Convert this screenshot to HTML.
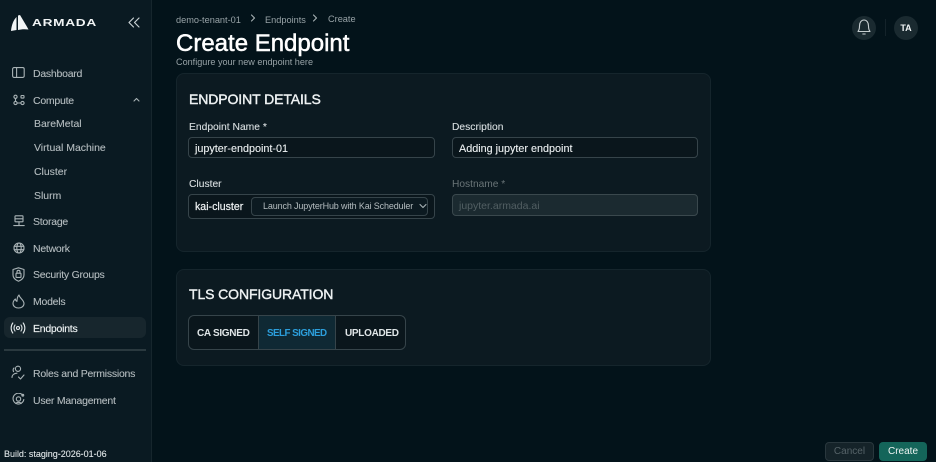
<!DOCTYPE html>
<html>
<head>
<meta charset="utf-8">
<style>
html,body{margin:0;padding:0;width:936px;height:462px;overflow:hidden;background:#03131a}
body{position:relative;font-family:"Liberation Sans","Noto Sans CJK JP",sans-serif;color:#e8eef0}
#w{position:absolute;left:0;top:0;width:936px;height:462px;filter:blur(.3px)}
.t{position:absolute;white-space:nowrap;line-height:14px}
.nav{font-size:10.5px;letter-spacing:-.25px;color:#b4bcbf;left:33px;-webkit-text-stroke:.1px #b4bcbf}
.sub{font-size:10.5px;letter-spacing:-.03px;color:#b4bcbf;left:34px;-webkit-text-stroke:.1px #b4bcbf}
.box{position:absolute;box-sizing:border-box;border:1px solid #36444a;border-radius:4px}
.card{position:absolute;box-sizing:border-box;background:#0c1a21;border:1px solid #15252c;border-radius:8px}
svg{position:absolute;fill:none;stroke:#a9b3b6;stroke-width:1.1;stroke-linecap:round;stroke-linejoin:round}
.lbl{font-size:10.3px;color:#d6dcde;-webkit-text-stroke:.12px #d6dcde}
.h{font-size:14px;letter-spacing:-.1px;font-weight:400;color:#eef2f3;-webkit-text-stroke:.4px #eef2f3}
.seg{font-size:10px;letter-spacing:-.3px;font-weight:700;color:#dfe5e7}
</style>
</head>
<body>
<div id="w">
<div style="position:absolute;left:0;top:0;width:151px;height:462px;background:#0a1a22;border-right:1px solid #16262d"></div>

<svg style="left:10px;top:14px;stroke:none;fill:#f2f5f6" width="20" height="18" viewBox="0 0 20 18"><path d="M1 17 C1.5 11 3.5 6 6.5 3 L6.5 16 Z"/><path d="M8 16 L8 1.5 L10 1 C13 6 16 11 18.5 15.5 C15 15 11 15.2 8 16 Z"/></svg>
<div class="t" style="left:32px;top:16px;font-size:10.5px;font-weight:700;letter-spacing:.55px;color:#f2f5f6;transform:scaleX(1.3);transform-origin:left center">ARMADA</div>
<svg style="left:128px;top:17px;stroke:#c8d0d2;stroke-width:1.2" width="12" height="11" viewBox="0 0 12 11"><path d="M5.5 1 L1 5.5 L5.5 10"/><path d="M11 1 L6.5 5.5 L11 10"/></svg>

<svg style="left:12px;top:67px" width="13" height="11" viewBox="0 0 13 11"><rect x=".6" y=".6" width="11.6" height="9.8" rx="1.5"/><path d="M4.6 .6 V10.4"/></svg>
<div class="t nav" style="top:67px">Dashboard</div>

<svg style="left:13px;top:94px" width="12" height="12" viewBox="0 0 12 12"><circle cx="2.5" cy="2.8" r="1.6"/><circle cx="2.5" cy="9" r="1.6"/><circle cx="9.5" cy="9" r="1.6"/><rect x="8" y="1.5" width="3" height="2.6" rx=".6"/><path d="M2.5 4.4 V7.4 M4.1 9 H8"/></svg>
<div class="t nav" style="top:94px">Compute</div>
<svg style="left:133px;top:97px" width="7" height="5" viewBox="0 0 7 5"><path d="M1 4 L3.5 1.5 L6 4"/></svg>

<div class="t sub" style="top:117px">BareMetal</div>
<div class="t sub" style="top:141px">Virtual Machine</div>
<div class="t sub" style="top:165px">Cluster</div>
<div class="t sub" style="top:189px">Slurm</div>

<svg style="left:13px;top:215px" width="12" height="12" viewBox="0 0 12 12"><rect x="2" y=".8" width="8" height="6" rx=".6"/><path d="M2 3.8 H10 M6 6.8 V10 M.8 10.6 H11.2"/></svg>
<div class="t nav" style="top:215px">Storage</div>

<svg style="left:13px;top:242px" width="12" height="12" viewBox="0 0 12 12"><circle cx="6" cy="6" r="5"/><ellipse cx="6" cy="6" rx="2.2" ry="5"/><path d="M1.2 4.3 H10.8 M1.2 7.7 H10.8"/></svg>
<div class="t nav" style="top:242px">Network</div>

<svg style="left:12px;top:267px" width="13" height="15" viewBox="0 0 13 15"><path d="M6.5 .8 L12 2.5 V8 C12 11 9.5 13 6.5 14.2 C3.5 13 1 11 1 8 V2.5 Z"/><rect x="4" y="6.2" width="5" height="4.2" rx=".7"/><path d="M5 6.2 V4.8 A1.5 1.5 0 0 1 8 4.8 V6.2"/></svg>
<div class="t nav" style="top:268px">Security Groups</div>

<svg style="left:12px;top:294px" width="13" height="15" viewBox="0 0 13 15"><path d="M7 1 C7.5 4 12 6 12 9.5 C12 12.3 9.5 14 6.5 14 C3.5 14 1 12.3 1 9.5 C1 7.5 2 6.2 3.3 5 C3.5 6.3 4 7 5 7.3 C5 5 5.5 2.5 7 1 Z"/></svg>
<div class="t nav" style="top:295px">Models</div>

<div style="position:absolute;left:4px;top:317px;width:142px;height:21px;background:#17262d;border-radius:6px"></div>
<svg style="left:10px;top:322px;stroke:#e2e8ea" width="16" height="12" viewBox="0 0 16 12"><circle cx="8" cy="6" r="1.5"/><path d="M5 3 C3.8 4.8 3.8 7.2 5 9 M11 3 C12.2 4.8 12.2 7.2 11 9 M2.8 1 C.6 4 .6 8 2.8 11 M13.2 1 C15.4 4 15.4 8 13.2 11"/></svg>
<div class="t nav" style="top:322px;color:#eef2f3;-webkit-text-stroke:.15px #eef2f3">Endpoints</div>

<div style="position:absolute;left:4px;top:349px;width:142px;height:2px;background:#2a393f"></div>

<svg style="left:11px;top:365px" width="14" height="15" viewBox="0 0 14 15"><circle cx="7" cy="3.8" r="2.6"/><path d="M3 3 A3 3 0 0 0 2.6 6.6 M1 12.5 C1 10 3 8.4 6 8.2 M7.5 12 L9.5 14 L13 10"/></svg>
<div class="t nav" style="top:367px">Roles and Permissions</div>

<svg style="left:12px;top:393px" width="13" height="13" viewBox="0 0 13 13"><path d="M10.5 2 A5.4 5.4 0 1 0 11.8 6.5"/><circle cx="6.5" cy="6" r="2.2"/><path d="M3.8 10.5 C4.5 9 8.5 9 9.2 10.5"/><circle cx="10.8" cy="2.2" r=".9"/></svg>
<div class="t nav" style="top:394px">User Management</div>

<div class="t" style="left:4px;top:447px;font-size:9px;letter-spacing:-.02px;color:#dfe5e7;-webkit-text-stroke:.1px #dfe5e7">Build: staging-2026-01-06</div>

<div class="t" style="left:176px;top:13px;font-size:9.2px;color:#98a3a7">demo-tenant-01</div>
<svg style="left:250px;top:14px" width="6" height="8" viewBox="0 0 6 8"><path d="M1.5 1 L4.5 4 L1.5 7"/></svg>
<div class="t" style="left:265px;top:13px;font-size:9.2px;color:#98a3a7">Endpoints</div>
<svg style="left:312px;top:14px" width="6" height="8" viewBox="0 0 6 8"><path d="M1.5 1 L4.5 4 L1.5 7"/></svg>
<div class="t" style="left:328px;top:12px;font-size:9.2px;color:#98a3a7">Create</div>

<div class="t" style="left:176px;top:30px;font-size:24px;line-height:28px;color:#fff;-webkit-text-stroke:.5px #fff">Create Endpoint</div>
<div class="t" style="left:176px;top:55px;font-size:9.1px;color:#98a3a7">Configure your new endpoint here</div>

<div style="position:absolute;left:852px;top:16px;width:24px;height:24px;border-radius:50%;background:#1a2a30"></div>
<svg style="left:856px;top:18px;stroke:#c6ced0" width="16" height="18" viewBox="0 0 16 18"><path d="M2 13.5 C3.2 12 3.5 10.5 3.5 8 C3.5 4.5 5.2 2 8 2 C10.8 2 12.5 4.5 12.5 8 C12.5 10.5 12.8 12 14 13.5 Z"/><path d="M6.8 16 H9.2"/></svg>
<div style="position:absolute;left:885px;top:19px;width:1px;height:17px;background:#14232a"></div>
<div style="position:absolute;left:894px;top:16px;width:24px;height:24px;border-radius:50%;background:#1a2a30"></div>
<div class="t" style="left:894px;top:21px;width:24px;text-align:center;font-size:9px;font-weight:700;color:#f0f4f5">TA</div>

<div class="card" style="left:176px;top:73px;width:535px;height:179px"></div>
<div class="t h" style="left:189px;top:92px">ENDPOINT DETAILS</div>

<div class="t lbl" style="left:189px;top:121px">Endpoint Name *</div>
<div class="box" style="left:188px;top:137px;width:247px;height:21px;background:#0a161c"></div>
<div class="t" style="left:195px;top:142px;font-size:10.8px;color:#eef2f3;-webkit-text-stroke:.1px #eef2f3">jupyter-endpoint-01</div>

<div class="t lbl" style="left:452px;top:121px">Description</div>
<div class="box" style="left:452px;top:137px;width:246px;height:21px;background:#0a161c"></div>
<div class="t" style="left:459px;top:142px;font-size:10.8px;color:#eef2f3;-webkit-text-stroke:.1px #eef2f3">Adding jupyter endpoint</div>

<div class="t lbl" style="left:189px;top:178px">Cluster</div>
<div class="box" style="left:188px;top:194px;width:247px;height:25px;background:#0a161c"></div>
<div class="t" style="left:195px;top:200px;font-size:10.6px;color:#eef2f3;-webkit-text-stroke:.2px #eef2f3">kai-cluster</div>
<div class="box" style="left:251px;top:197px;width:177px;height:19px;background:#0c1a21"></div>
<div class="t" style="left:263px;top:199px;font-size:9px;letter-spacing:-.14px;color:#b4bcbf">Launch JupyterHub with Kai Scheduler</div>
<svg style="left:419px;top:203px" width="8" height="6" viewBox="0 0 8 6"><path d="M1 1.5 L4 4.5 L7 1.5"/></svg>

<div class="t lbl" style="left:452px;top:178px;color:#6a7578;-webkit-text-stroke:0;font-size:10.2px">Hostname *</div>
<div class="box" style="left:452px;top:194px;width:246px;height:22px;background:#1b2a30;border-color:#3a484d"></div>
<div class="t" style="left:459px;top:199px;font-size:10.5px;color:#525f63">jupyter.armada.ai</div>

<div class="card" style="left:176px;top:269px;width:535px;height:97px"></div>
<div class="t h" style="left:189px;top:287px">TLS CONFIGURATION</div>

<div class="box" style="left:188px;top:315px;width:218px;height:35px;border-radius:6px;background:#0a161c"></div>
<div style="position:absolute;left:258px;top:316px;width:78px;height:33px;background:#0f2934;border-left:1px solid #36444a;border-right:1px solid #36444a;box-sizing:border-box"></div>
<div class="t seg" style="left:197px;top:327px">CA SIGNED</div>
<div class="t seg" style="left:267px;top:327px;color:#2c9fdc;letter-spacing:-.52px;font-size:9.8px">SELF SIGNED</div>
<div class="t seg" style="left:345px;top:327px">UPLOADED</div>

<div class="box" style="left:825px;top:442px;width:49px;height:19px;background:#152329;border-color:#29373d"></div>
<div class="t" style="left:825px;top:445px;width:49px;text-align:center;font-size:10px;color:#566368">Cancel</div>
<div style="position:absolute;left:879px;top:442px;width:48px;height:19px;border-radius:4px;background:#14655a"></div>
<div class="t" style="left:879px;top:445px;width:48px;text-align:center;font-size:10px;color:#eef5f3">Create</div>
</div>
</body>
</html>
